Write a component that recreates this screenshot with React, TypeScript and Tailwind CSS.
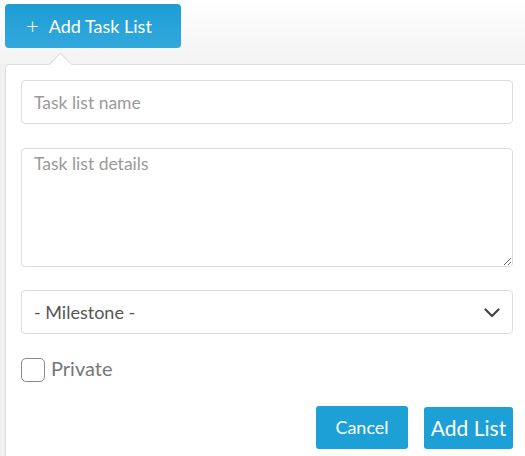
import { useState } from "react";

function Chevron() {
  return (
    <svg
      width="16"
      height="10"
      viewBox="0 0 16 10"
      className="pointer-events-none absolute right-[13px] top-[18px]"
    >
      <path d="M1.5 1.5 L8 8 L14.5 1.5" fill="none" stroke="#444" strokeWidth="2.2" strokeLinecap="round" strokeLinejoin="round" />
    </svg>
  );
}

export default function App() {
  const [name, setName] = useState("");
  const [details, setDetails] = useState("");
  const [isPrivate, setIsPrivate] = useState(false);

  return (
    <div
      className="relative h-[456px] w-[525px] overflow-hidden bg-[#f1f1f1]"
      style={{ fontFamily: "Lato, 'Open Sans', sans-serif" }}
    >
      <div className="h-[64px] bg-gradient-to-b from-white to-[#f3f3f3] pl-[5px] pt-[4px]">
        <button className="flex h-[44px] w-[176px] items-center gap-[10px] rounded-[4px] bg-gradient-to-b from-[#1b9dd5] to-[#33a8dc] pl-[21px] text-[18px] text-white">
          <span className="text-[22px] leading-none font-light">+</span>
          <span>Add Task List</span>
        </button>
      </div>

      <div className="relative ml-[5px] w-[524px] rounded-tl-[4px] border border-[#dcdcdc] bg-white p-[15px]">
        <div className="absolute left-[46px] top-[-9.5px] h-[17px] w-[17px] rotate-45 border-l border-t border-[#dcdcdc] bg-white" />

        <input
          value={name}
          onChange={(e) => setName(e.target.value)}
          placeholder="Task list name"
          className="relative block h-[44px] w-full rounded-[4px] border border-[#dcdcdc] px-[12px] text-[17.5px] text-[#555] placeholder:text-[#9a9a9a] outline-none"
        />

        <textarea
          value={details}
          onChange={(e) => setDetails(e.target.value)}
          placeholder="Task list details"
          className="mt-[24px] block h-[119px] w-full rounded-[4px] border border-[#dcdcdc] px-[12px] pt-[2px] text-[17.5px] text-[#555] placeholder:text-[#9a9a9a] outline-none"
        />

        <div className="relative mt-[23px]">
          <select className="block h-[44px] w-full appearance-none rounded-[4px] border border-[#dcdcdc] bg-white px-[12px] text-[18px] text-[#555] outline-none">
            <option>- Milestone -</option>
          </select>
          <Chevron />
        </div>

        <label className="mt-[24px] flex h-[24px] items-center gap-[6px] leading-none">
          <input
            type="checkbox"
            checked={isPrivate}
            onChange={(e) => setIsPrivate(e.target.checked)}
            className="h-[24px] w-[24px] appearance-none rounded-[5px] border border-[#8a8a8a] bg-white"
          />
          <span className="relative top-[-2px] text-[20px] text-[#777]">Private</span>
        </label>

        <div className="mt-[24px] flex items-start justify-end gap-[16px]">
          <button className="h-[43px] w-[92px] rounded-[3px] bg-[#1ca0d6] text-[18px] text-white">
            Cancel
          </button>
          <button className="mt-[1px] h-[42px] w-[89px] rounded-[3px] bg-[#1ca0d6] text-[21px] text-white">
            Add List
          </button>
        </div>
      </div>
    </div>
  );
}
